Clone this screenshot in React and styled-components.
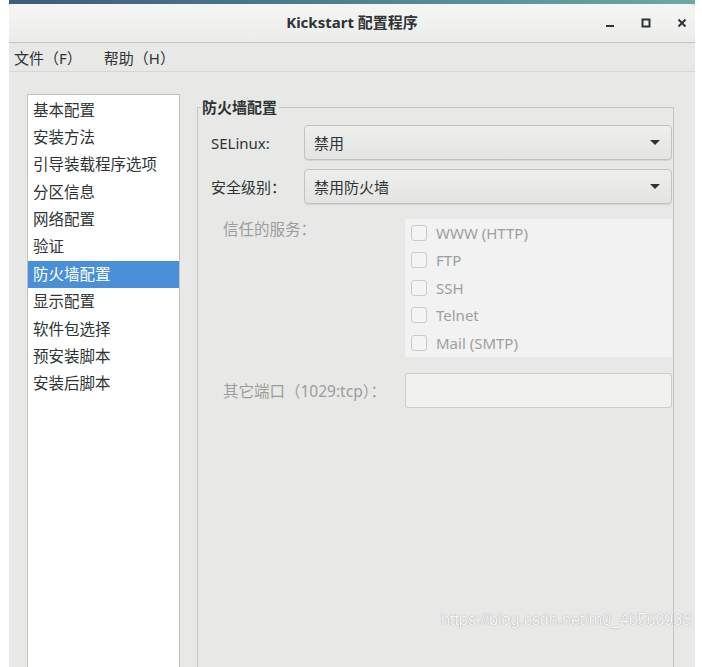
import React from 'react';
import styled, { createGlobalStyle } from 'styled-components';

const GlobalStyle = createGlobalStyle`
  html, body {
    margin: 0;
    padding: 0;
    background: #ffffff;
    font-family: "Noto Sans", "Noto Sans CJK SC", sans-serif;
  }
  * { box-sizing: border-box; }
`;

const sections = [
  '基本配置',
  '安装方法',
  '引导装载程序选项',
  '分区信息',
  '网络配置',
  '验证',
  '防火墙配置',
  '显示配置',
  '软件包选择',
  '预安装脚本',
  '安装后脚本',
];

const services = ['WWW (HTTP)', 'FTP', 'SSH', 'Telnet', 'Mail (SMTP)'];

const App = () => {
  return (
    <Page>
      <GlobalStyle />
      <Window>
        <DesktopStrip />
        <TitleBar>
          <Title>Kickstart 配置程序</Title>
          <Controls>
            <ControlButton aria-label="最小化">
              <svg width="10" height="10" viewBox="0 0 10 10">
                <rect x="1" y="7" width="8" height="2" fill="#2e3436" />
              </svg>
            </ControlButton>
            <ControlButton aria-label="最大化">
              <svg width="10" height="10" viewBox="0 0 10 10">
                <rect x="1.5" y="1.5" width="7" height="7" fill="none" stroke="#2e3436" strokeWidth="2" />
              </svg>
            </ControlButton>
            <ControlButton aria-label="关闭">
              <svg width="10" height="10" viewBox="0 0 10 10">
                <path d="M1.5 1.5 L8.5 8.5 M8.5 1.5 L1.5 8.5" stroke="#2e3436" strokeWidth="2" />
              </svg>
            </ControlButton>
          </Controls>
        </TitleBar>

        <MenuBar>
          <MenuItem>文件（F）</MenuItem>
          <MenuItem>帮助（H）</MenuItem>
        </MenuBar>

        <Body>
          <SideList>
            {sections.map((s) => (
              <SideItem key={s} selected={s === '防火墙配置'}>{s}</SideItem>
            ))}
          </SideList>

          <Frame>
            <Legend>防火墙配置</Legend>

            <FormRow>
              <Label>SELinux:</Label>
              <Combo>
                <span>禁用</span>
                <Arrow />
              </Combo>
            </FormRow>

            <FormRow>
              <Label>安全级别：</Label>
              <Combo>
                <span>禁用防火墙</span>
                <Arrow />
              </Combo>
            </FormRow>

            <ServicesRow>
              <DimLabel top="-3px">信任的服务：</DimLabel>
              <ServiceList>
                {services.map((s) => (
                  <ServiceItem key={s}>
                    <CheckBox />
                    <span>{s}</span>
                  </ServiceItem>
                ))}
              </ServiceList>
            </ServicesRow>

            <PortRow>
              <DimLabel>其它端口（1029:tcp）：</DimLabel>
              <Entry />
            </PortRow>
          </Frame>
        </Body>

        <Watermark>https://blog.csdn.net/m0_46563938</Watermark>
      </Window>
    </Page>
  );
};

export default App;

const Page = styled.div`
  width: 702px;
  height: 667px;
  overflow: hidden;
  background: #ffffff;
`;

const Window = styled.div`
  position: relative;
  margin-left: 9px;
  width: 686px;
  height: 667px;
  display: flex;
  flex-direction: column;
  background: #e8e8e7;
`;

const DesktopStrip = styled.div`
  height: 4px;
  flex-shrink: 0;
  background: linear-gradient(90deg, #3d5c78 0%, #4f8190 50%, #6aaaa6 100%);
`;

const TitleBar = styled.div`
  height: 39px;
  flex-shrink: 0;
  display: flex;
  align-items: center;
  justify-content: center;
  position: relative;
  background: linear-gradient(#f5f5f4, #ececeb);
  border-bottom: 1px solid #c4c4c3;
  border-radius: 5px 7px 0 0;
`;

const Title = styled.div`
  font-size: 15px;
  font-weight: 700;
  color: #2e3436;
  margin-top: -3px;
`;

const Controls = styled.div`
  position: absolute;
  right: 4px;
  top: 0;
  height: 100%;
  display: flex;
  align-items: center;
  gap: 18px;
`;

const ControlButton = styled.div`
  width: 18px;
  height: 18px;
  display: flex;
  align-items: center;
  justify-content: center;
  margin-top: -1px;
`;

const MenuBar = styled.div`
  height: 29px;
  flex-shrink: 0;
  display: flex;
  align-items: center;
  gap: 22px;
  padding-left: 5px;
  border-bottom: 1px solid #d6d6d5;
  background: #e8e8e7;
`;

const MenuItem = styled.div`
  font-size: 15px;
  color: #2e3436;
`;

const Body = styled.div`
  flex: 1;
  display: flex;
  gap: 17px;
  padding: 22px 21px 0 18px;
  min-height: 0;
`;

const SideList = styled.div`
  width: 153px;
  flex-shrink: 0;
  background: #ffffff;
  border: 1px solid #c2c2c1;
  border-bottom: none;
  padding-top: 1.5px;
`;

const SideItem = styled.div`
  height: 27.4px;
  line-height: 27.4px;
  padding-left: 5px;
  font-size: 15.5px;
  white-space: nowrap;
  color: ${(p) => (p.selected ? '#ffffff' : '#2e3436')};
  background: ${(p) => (p.selected ? '#4a90d9' : 'transparent')};
`;

const Frame = styled.fieldset`
  flex: 1;
  margin: 4px 0 0 0;
  padding: 9px 1px 0 0;
  border: 1px solid #c6c6c5;
  border-bottom: none;
  display: flex;
  flex-direction: column;
  min-width: 0;
`;

const Legend = styled.legend`
  font-size: 15px;
  font-weight: 700;
  color: #2e3436;
  margin-left: 3px;
  padding: 0 2px 0 1px;
  line-height: 18px;
`;

const FormRow = styled.div`
  display: flex;
  align-items: center;
  padding-left: 13px;
  margin-bottom: 9px;
`;

const Label = styled.div`
  width: 93px;
  flex-shrink: 0;
  font-size: 15px;
  color: #2e3436;
`;

const Combo = styled.div`
  flex: 1;
  height: 35px;
  display: flex;
  align-items: center;
  justify-content: space-between;
  padding: 0 11px 0 9px;
  font-size: 15px;
  color: #2e3436;
  border: 1px solid #c1c1c0;
  border-radius: 4px;
  background: linear-gradient(#eeeeed, #e4e4e3);
  box-shadow: 0 1px 0 rgba(0, 0, 0, 0.08);
`;

const Arrow = styled.div`
  width: 0;
  height: 0;
  border-left: 5px solid transparent;
  border-right: 5px solid transparent;
  border-top: 5px solid #2e3436;
`;

const ServicesRow = styled.div`
  display: flex;
  align-items: flex-start;
  padding-left: 25px;
  margin-top: 7px;
`;

const DimLabel = styled.div`
  width: 182px;
  flex-shrink: 0;
  font-size: 15.5px;
  color: #9b9d9c;
  white-space: nowrap;
  margin-top: ${(p) => (p.top ? p.top : 0)};
`;

const ServiceList = styled.div`
  flex: 1;
  display: flex;
  flex-direction: column;
  background: #f2f2f2;
  padding: 0 0 0 6px;
  margin-top: -1px;
`;

const ServiceItem = styled.div`
  height: 27.5px;
  display: flex;
  align-items: center;
  gap: 9px;
  font-size: 15px;
  color: #9d9f9e;
`;

const CheckBox = styled.div`
  width: 16px;
  height: 16px;
  border: 1px solid #cacaca;
  border-radius: 3px;
  background: #f4f4f4;
`;

const PortRow = styled.div`
  display: flex;
  align-items: center;
  padding-left: 25px;
  margin-top: 16px;
`;

const Entry = styled.div`
  flex: 1;
  height: 35px;
  border: 1px solid #cdcdcc;
  border-radius: 3px;
  background: #f1f1f0;
`;

const Watermark = styled.div`
  position: absolute;
  right: 4px;
  bottom: 38px;
  font-family: "Liberation Sans", Arial, sans-serif;
  font-size: 16px;
  color: rgba(255, 255, 255, 0.95);
  text-shadow: 0 0 1px rgba(110, 110, 110, 0.8);
`;
